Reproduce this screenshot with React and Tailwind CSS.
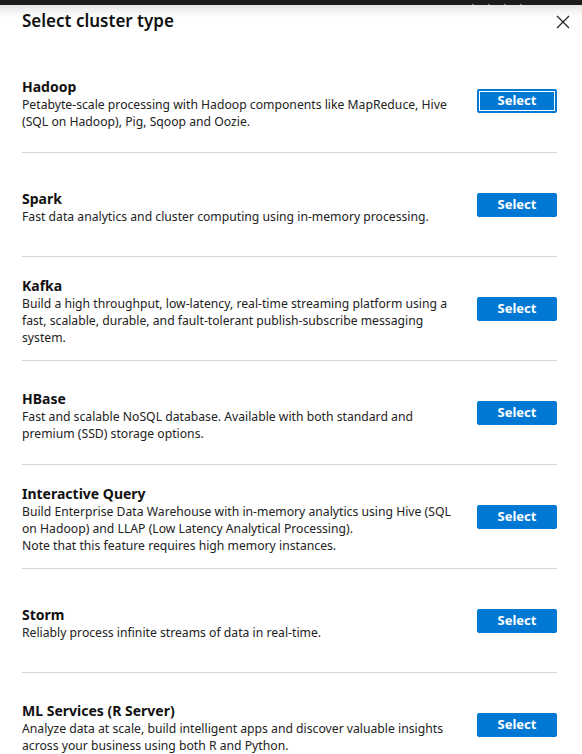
import React from 'react';

const clusters = [
  {
    name: 'Hadoop',
    lines: ['Petabyte-scale processing with Hadoop components like MapReduce, Hive', '(SQL on Hadoop), Pig, Sqoop and Oozie.'],
    focused: true,
  },
  { name: 'Spark', lines: ['Fast data analytics and cluster computing using in-memory processing.'] },
  {
    name: 'Kafka',
    lines: [
      'Build a high throughput, low-latency, real-time streaming platform using a',
      'fast, scalable, durable, and fault-tolerant publish-subscribe messaging',
      'system.',
    ],
  },
  {
    name: 'HBase',
    lines: ['Fast and scalable NoSQL database. Available with both standard and', 'premium (SSD) storage options.'],
  },
  {
    name: 'Interactive Query',
    lines: [
      'Build Enterprise Data Warehouse with in-memory analytics using Hive (SQL',
      'on Hadoop) and LLAP (Low Latency Analytical Processing).',
      'Note that this feature requires high memory instances.',
    ],
  },
  { name: 'Storm', lines: ['Reliably process infinite streams of data in real-time.'] },
  {
    name: 'ML Services (R Server)',
    lines: ['Analyze data at scale, build intelligent apps and discover valuable insights', 'across your business using both R and Python.'],
  },
];

function ClusterRow({ cluster }) {
  return (
    <div className="h-[104px] flex items-center border-b border-[#d6d6d6] shrink-0">
      <div className="flex-1 min-w-0 mt-[5px]">
        <div className="text-[14px] font-bold leading-[19px] text-[#111]">{cluster.name}</div>
        <div className="text-[12.2px] leading-[17px] text-[#222]">
          {cluster.lines.map((l, i) => (
            <div key={i} className="whitespace-nowrap">{l}</div>
          ))}
        </div>
      </div>
      <button
        className={
          'w-[80px] h-[24px] rounded-[2px] bg-[#0078d4] text-white text-[13px] font-bold leading-none shrink-0 ' +
          (cluster.focused ? 'outline outline-1 outline-white -outline-offset-[3px]' : '')
        }
      >
        Select
      </button>
    </div>
  );
}

export default function App() {
  return (
    <div
      className="w-[582px] h-[754px] bg-white overflow-hidden flex flex-col relative"
      style={{ fontFamily: '"Noto Sans", "Open Sans", sans-serif' }}
    >
      <div className="h-[5px] bg-[#1c1c1c] shrink-0 flex justify-end pr-[60px] gap-[14px] items-end">
        <span className="w-[2px] h-[1px] bg-[#777]" />
        <span className="w-[2px] h-[1px] bg-[#777]" />
        <span className="w-[2px] h-[1px] bg-[#777]" />
        <span className="w-[2px] h-[1px] bg-[#777]" />
      </div>
      <div className="h-[12px] bg-gradient-to-b from-[#e6e6e6] to-white shrink-0 -mb-[12px]" />
      <div className="flex items-start justify-between pl-[22px] pr-[12px] pt-[4px] h-[44px] shrink-0">
        <h1 className="text-[17px] font-semibold text-[#111] leading-[23px]">Select cluster type</h1>
        <svg width="14" height="14" viewBox="0 0 14 14" className="mt-[6px]">
          <path d="M1 1 L13 13 M13 1 L1 13" stroke="#222" strokeWidth="1.2" />
        </svg>
      </div>
      <div className="pl-[22px] pr-[25px] flex flex-col">
        {clusters.map((c) => (
          <ClusterRow key={c.name} cluster={c} />
        ))}
      </div>
    </div>
  );
}
